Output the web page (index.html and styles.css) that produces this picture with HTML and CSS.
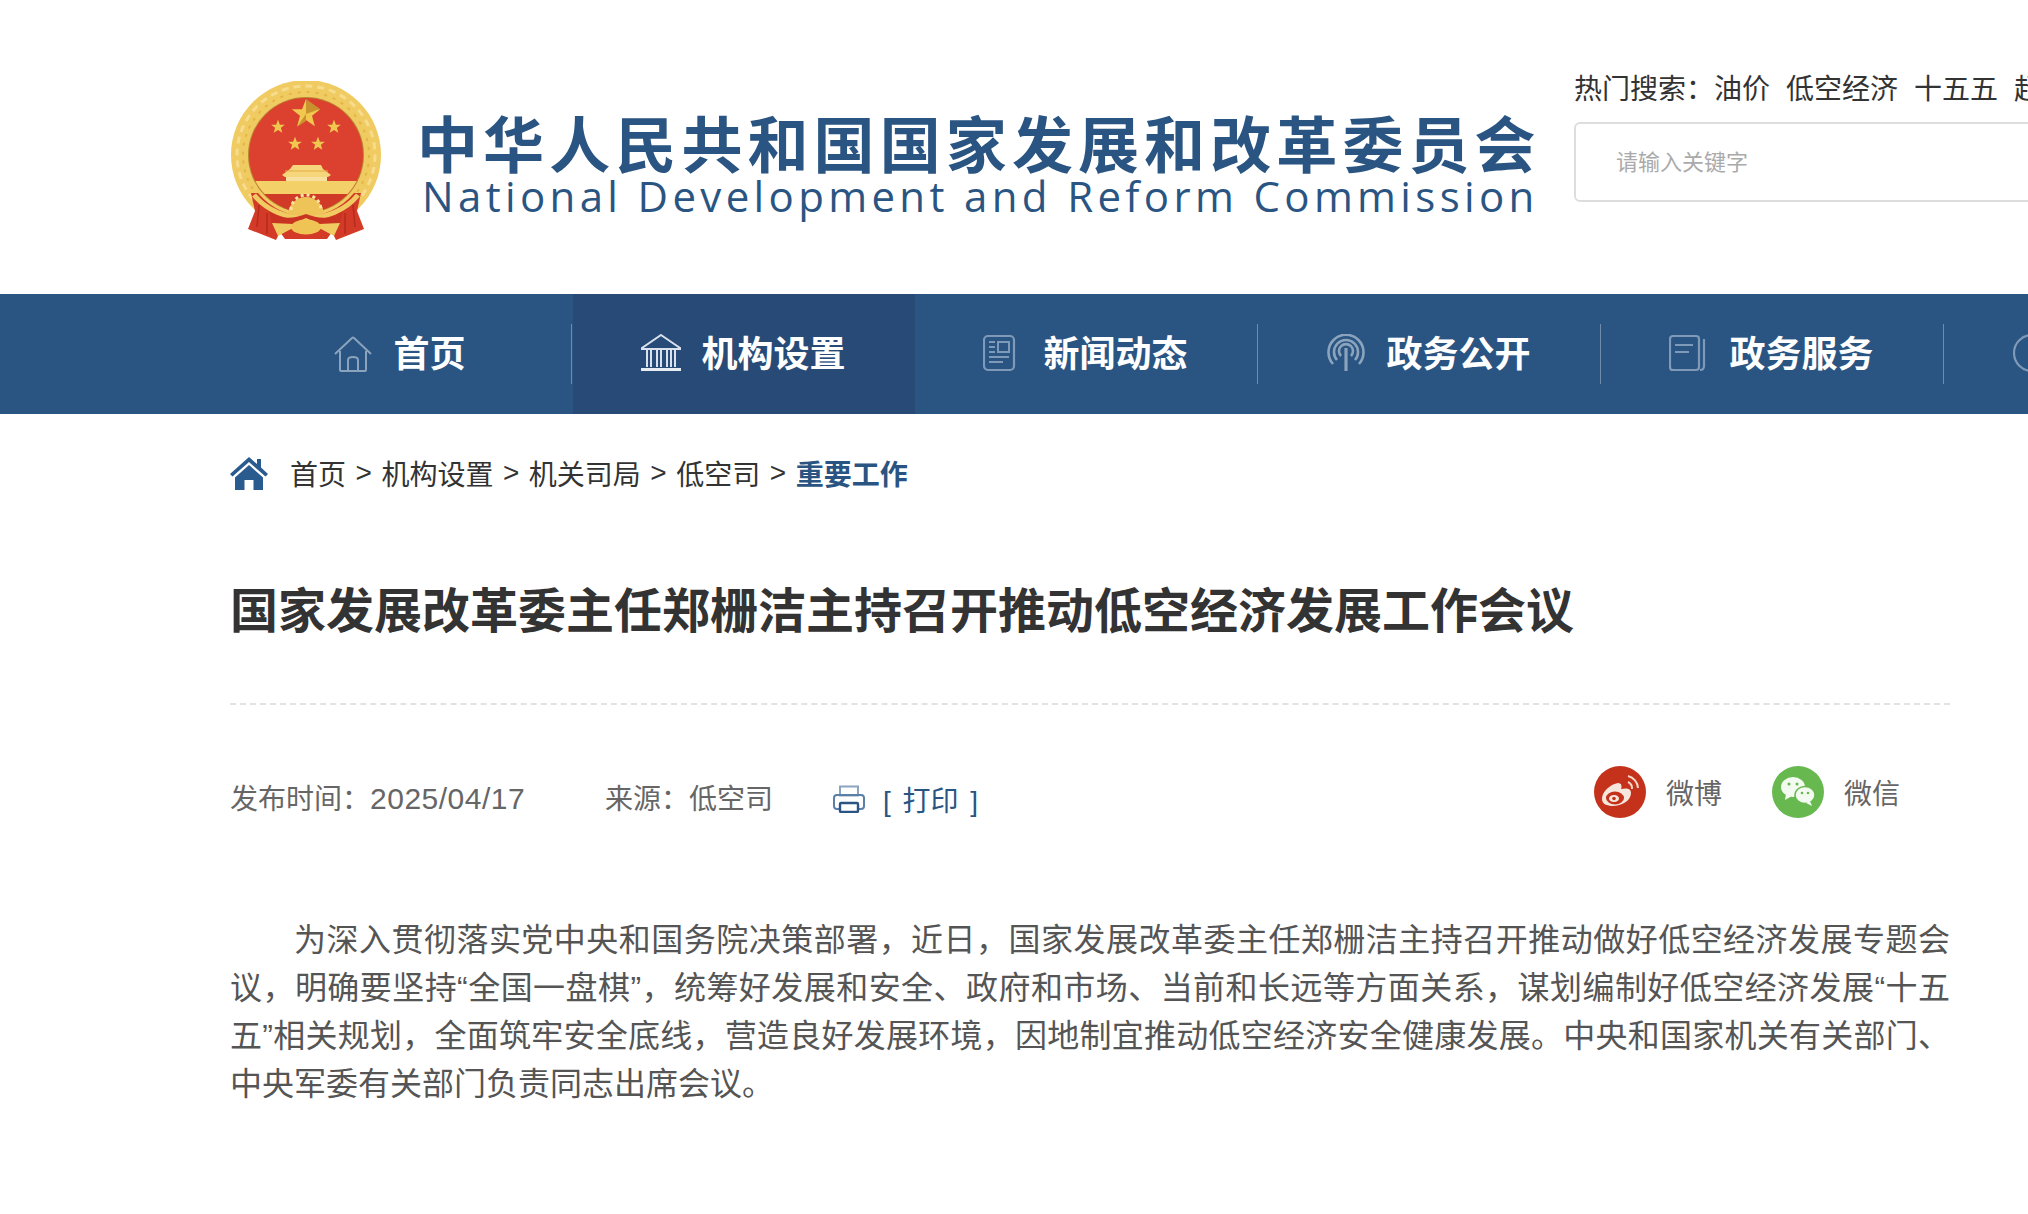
FILE: index.html
```html
<!DOCTYPE html>
<html lang="zh-CN">
<head>
<meta charset="utf-8">
<title>国家发展改革委主任郑栅洁主持召开推动低空经济发展工作会议</title>
<link rel="stylesheet" href="styles.css">
</head>
<body>
<header class="header">
  <svg class="emblem" viewBox="0 0 150 160" width="150" height="160">
    <defs>
      <clipPath id="disc"><circle cx="75" cy="74" r="57"/></clipPath>
      <polygon id="star" points="0,-10 2.6,-3.1 9.5,-3.1 4,1.2 5.9,8.1 0,4 -5.9,8.1 -4,1.2 -9.5,-3.1 -2.6,-3.1"/>
    </defs>
    <circle cx="75" cy="74" r="75" fill="#f0cb61"/>
    <circle cx="75" cy="74" r="69" fill="none" stroke="#f7dc8e" stroke-width="3" stroke-dasharray="7 5"/>
    <circle cx="75" cy="74" r="63" fill="none" stroke="#e3b64a" stroke-width="2" stroke-dasharray="3 6"/>
    <circle cx="75" cy="74" r="58" fill="#b98530"/>
    <circle cx="75" cy="74" r="57" fill="#dc4130"/>
    <g clip-path="url(#disc)">
      <rect x="20" y="100" width="110" height="13" fill="#f4d068"/>
      <rect x="20" y="113" width="110" height="30" fill="#d23a28"/>
    </g>
    <path d="M62 84 H90 L92 88 L100 94 L97 96 H54 L51 94 L59 88 Z" fill="#f6d67c"/>
    <path d="M54 90 H97" stroke="#e3ac3e" stroke-width="1"/>
    <rect x="55" y="96" width="41" height="4" fill="#f8e0a0"/>
    <use href="#star" transform="translate(75 33) scale(1.5)" fill="#f1c84f"/>
    <path d="M75 18 L75 33 L89 28 Z M75 33 L66 46 L75 40 Z" fill="#c8922e"/>
    <use href="#star" transform="translate(47 46) scale(.72)" fill="#f1c84f"/>
    <use href="#star" transform="translate(103 46) scale(.72)" fill="#f1c84f"/>
    <use href="#star" transform="translate(64 63) scale(.72)" fill="#f1c84f"/>
    <use href="#star" transform="translate(87 63) scale(.72)" fill="#f1c84f"/>
    <path d="M20 112 L24 130 L17 148 L45 159 L49 151 L54 158 H96 L101 151 L105 159 L133 148 L126 130 L130 112 L123 112 C110 128 92 135 75 135 C58 135 40 128 27 112 Z" fill="#d33a27"/>
    <path d="M28 124 L26 146 M36 132 L36 153 M122 124 L124 146 M114 132 L114 153" stroke="#b52c1c" stroke-width="1.500"/>
    <path d="M23 114 C36 130 56 137 75 137 C94 137 114 130 127 114" fill="none" stroke="#f0cb61" stroke-width="5"/>
    <path d="M57 134 A18 18 0 0 1 93 134 Z" fill="#eec358"/>
    <path d="M60 129 A15 15 0 0 1 90 129" fill="none" stroke="#f8e3a0" stroke-width="3" stroke-dasharray="3 3"/>
    <path d="M38 130 C50 139 62 138 75 133 C88 138 100 139 112 130 L109 143 H41 Z" fill="#c93422"/>
    <path d="M41 142 L62 143 L75 137 L88 143 L109 142 L103 155 L90 148 H60 L47 155 Z" fill="#f0cb61"/>
    <ellipse cx="75" cy="146" rx="15" ry="7.500" fill="#efc455"/>
  </svg>
  <div class="brand">
    <div class="brand-cn">中华人民共和国国家发展和改革委员会</div>
    <div class="brand-en">National Development and Reform Commission</div>
  </div>
  <div class="search">
    <div class="hot">
      <span>热门搜索：</span><a>油价</a><a>低空经济</a><a>十五五</a><a>超长期</a>
    </div>
    <div class="search-box">请输入关键字</div>
  </div>
</header>

<nav class="nav">
  <a class="nav-item">
    <svg class="nav-icon" viewBox="0 0 40 40" width="40" height="40"><path d="M2 20 L19 4 Q20 3 21 4 L38 20 M7 17 V36 Q7 37 8 37 H32 Q33 37 33 36 V17 M15 37 V26 Q15 23 20 23 Q25 23 25 26 V37" fill="none" stroke="#8ba3bd" stroke-width="2"/></svg>
    <span>首页</span>
  </a>
  <i class="sep"></i>
  <a class="nav-item active">
    <svg class="nav-icon" viewBox="0 0 40 40" width="40" height="40"><path d="M20 1 L39 14 V15 H1 V14 Z" fill="none" stroke="#d9e2ec" stroke-width="2"/><path d="M6 16 V33 M10 16 V33 M16 16 V33 M20 16 V33 M26 16 V33 M30 16 V33 M34 16 V33" stroke="#d9e2ec" stroke-width="2"/><path d="M0 35.5 H40" stroke="#e6ecf2" stroke-width="3"/></svg>
    <span>机构设置</span>
  </a>
  <i class="sep hidden"></i>
  <a class="nav-item">
    <svg class="nav-icon" viewBox="0 0 40 40" width="40" height="40"><rect x="1" y="2" width="30" height="34" rx="4" fill="none" stroke="#7f9ab8" stroke-width="2.2"/><path d="M6 8 H12 M6 13 H12 M6 18 H12 M6 23 H26 M6 28 H20" stroke="#7f9ab8" stroke-width="2"/><rect x="15" y="8" width="11" height="10" fill="none" stroke="#7f9ab8" stroke-width="2"/></svg>
    <span>新闻动态</span>
  </a>
  <i class="sep"></i>
  <a class="nav-item">
    <svg class="nav-icon" viewBox="0 0 40 40" width="40" height="40"><path d="M7 30 A17.5 17.5 0 1 1 33 30 M11 26 A12 12 0 1 1 29 26 M15 22 A7 7 0 1 1 25 22" fill="none" stroke="#8ba3bd" stroke-width="2.6"/><path d="M20 14 V37" stroke="#8ba3bd" stroke-width="3.2"/></svg>
    <span>政务公开</span>
  </a>
  <i class="sep"></i>
  <a class="nav-item">
    <svg class="nav-icon" viewBox="0 0 40 40" width="40" height="40"><rect x="1" y="2" width="29" height="34" rx="3" fill="none" stroke="#7f9ab8" stroke-width="2.2"/><path d="M35 5 V32 Q35 36 31 36" fill="none" stroke="#7f9ab8" stroke-width="2.2"/><path d="M6 11 H24 M6 18 H20" stroke="#7f9ab8" stroke-width="2.2"/></svg>
    <span>政务服务</span>
  </a>
  <i class="sep"></i>
  <a class="nav-item">
    <svg class="nav-icon" viewBox="0 0 40 40" width="40" height="40"><circle cx="20" cy="19" r="18" fill="none" stroke="#7f9ab8" stroke-width="2.2"/></svg>
    <span>互动交流</span>
  </a>
</nav>

<main class="main">
  <div class="crumbs">
    <svg class="crumb-home" viewBox="0 0 38 34" width="38" height="34"><path d="M19 1 L27 8 V3 H31 V11.5 L38 18 L35.5 20.5 L19 6 L2.500 20.500 L0 18 Z" fill="#2a5b8e"/><path d="M19 9 L33 21.500 V34 H23.500 V24 H14.500 V34 H5 V21.500 Z" fill="#2a5b8e"/></svg>
    <a>首页</a><b>&gt;</b><a>机构设置</a><b>&gt;</b><a>机关司局</a><b>&gt;</b><a>低空司</a><b>&gt;</b><strong>重要工作</strong>
  </div>

  <h1 class="title">国家发展改革委主任郑栅洁主持召开推动低空经济发展工作会议</h1>

  <div class="meta">
    <span class="date">发布时间：<span class="digits">2025/04/17</span></span>
    <span class="source">来源：低空司</span>
    <a class="print">
      <svg viewBox="0 0 32 28" width="32" height="28"><rect x="7" y="1.500" width="18" height="9" fill="none" stroke="#8aa4c0" stroke-width="2"/><rect x="1" y="10" width="30" height="14" rx="3" fill="none" stroke="#5b80a8" stroke-width="2"/><rect x="7" y="18" width="18" height="9" rx="1" fill="#fff" stroke="#2a5582" stroke-width="2.400"/></svg>
      <span class="print-label">[ 打印 ]</span>
    </a>
    <div class="share">
      <a class="share-item">
        <svg viewBox="0 0 52 52" width="52" height="52"><circle cx="26" cy="26" r="26" fill="#c5321c"/><path d="M8 33 C8 25 17 18 24 17 C28 17 28 21 27 23 C32 22 37 22 37 27 C37 35 27 40 19 40 C13 40 8 38 8 33 Z" fill="#f7e6dc"/><ellipse cx="21" cy="32" rx="9" ry="6.500" fill="#c5321c"/><ellipse cx="20" cy="32.500" rx="5" ry="3.600" fill="#f7e6dc"/><circle cx="20" cy="32.500" r="1.800" fill="#c5321c"/><path d="M34 16 A7 7 0 0 1 38 23 M34 10 A13 13 0 0 1 44 22" fill="none" stroke="#f3d6c8" stroke-width="2"/></svg>
        <span>微博</span>
      </a>
      <a class="share-item">
        <svg viewBox="0 0 52 52" width="52" height="52"><circle cx="26" cy="26" r="26" fill="#67b84f"/><ellipse cx="21" cy="21" rx="12" ry="10" fill="#f3faf0"/><path d="M14 28 L13 34 L20 30 Z" fill="#f3faf0"/><ellipse cx="33" cy="29" rx="10" ry="8.500" fill="#f3faf0" stroke="#67b84f" stroke-width="1.500"/><path d="M38 35 L40 40 L34 37 Z" fill="#f3faf0"/><circle cx="17" cy="18" r="1.500" fill="#67b84f"/><circle cx="25" cy="18" r="1.500" fill="#67b84f"/><circle cx="30" cy="27" r="1.300" fill="#67b84f"/><circle cx="36" cy="27" r="1.300" fill="#67b84f"/></svg>
        <span>微信</span>
      </a>
    </div>
  </div>

  <p class="article">为深入贯彻落实党中央和国务院决策部署，近日，国家发展改革委主任郑栅洁主持召开推动做好低空经济发展专题会议，明确要坚持“全国一盘棋”，统筹好发展和安全、政府和市场、当前和长远等方面关系，谋划编制好低空经济发展“十五五”相关规划，全面筑牢安全底线，营造良好发展环境，因地制宜推动低空经济安全健康发展。中央和国家机关有关部门、中央军委有关部门负责同志出席会议。</p>
</main>
</body>
</html>
```
FILE: styles.css
```css
* { box-sizing: border-box; }
html, body { margin: 0; padding: 0; height: 100%; overflow: hidden; background: #fff; }
body { font-family: "Liberation Sans", "Noto Sans CJK SC", sans-serif; color: #333; }
a { color: inherit; text-decoration: none; }

.header { display: flex; align-items: flex-start; height: 294px; padding-left: 231px; width: 2600px; }
.emblem { flex: none; margin-top: 81px; }
.brand { flex: none; width: 1155px; margin: 108px 0 0 36px; color: #2a5582; }
.brand-cn { font-family: "Noto Sans CJK SC", sans-serif; font-weight: 700; font-size: 61px; letter-spacing: 5.1px; line-height: 67px; white-space: nowrap; }
.brand-en { font-family: "Open Sans", sans-serif; font-size: 42px; letter-spacing: 4.35px; line-height: 42px; margin-left: 5px; white-space: nowrap; }

.search { flex: none; width: 800px; margin: 72px 0 0 2px; }
.hot { display: flex; gap: 16px; font-size: 28px; line-height: 36px; color: #333; white-space: nowrap; }
.hot span { margin-right: -16px; }
.search-box { width: 700px; height: 80px; margin-top: 14px; border: 2px solid #ddd; border-radius: 6px; padding-left: 40px; font-size: 22px; line-height: 78px; color: #aaa; }

.nav { display: flex; align-items: center; height: 120px; width: 2600px; padding-left: 229px; background: #2a5582; color: #fff; }
.nav-item { flex: none; display: flex; align-items: center; justify-content: center; gap: 20px; width: 342px; height: 120px; padding-right: 1px; font-size: 36px; font-weight: 700; }
.nav-item span { padding-bottom: 7px; }
.nav-item.active { background: #274b76; margin-left: 1px; margin-right: -1px; }
.nav-icon { flex: none; }
.sep { flex: none; width: 1px; height: 60px; background: #6f8cab; }
.sep.hidden { background: transparent; }

.main { width: 1950px; padding-left: 230px; }
.crumbs { display: flex; align-items: center; height: 120px; padding-bottom: 2px; font-size: 28px; color: #333; white-space: nowrap; }
.crumb-home { margin-right: 22px; }
.crumbs b { font-weight: 400; width: 35.4px; text-align: center; }
.crumbs strong { color: #2a5582; font-weight: 700; }

.title { margin: 0; height: 171px; padding-top: 50px; border-bottom: 2px dashed #e2e2e2; font-size: 48px; line-height: 56px; font-weight: 700; color: #333; white-space: nowrap; }

.meta { display: flex; align-items: center; height: 70px; margin-top: 52px; font-size: 28px; color: #666; white-space: nowrap; }
.date { width: 375px; padding-top: 9px; }
.digits { font-size: 30px; letter-spacing: .5px; }
.source { width: 228px; padding-top: 9px; }
.print { display: flex; align-items: center; gap: 18px; padding-top: 14px; color: #2a5582; }
.print-label { word-spacing: 4px; }
.share { display: flex; gap: 50px; margin-left: auto; margin-right: 50px; }
.share-item { display: flex; align-items: center; gap: 20px; }

.article { margin: 89px 0 0; font-size: 32px; line-height: 48px; color: #555; text-align: justify; text-indent: 64px; }
```
